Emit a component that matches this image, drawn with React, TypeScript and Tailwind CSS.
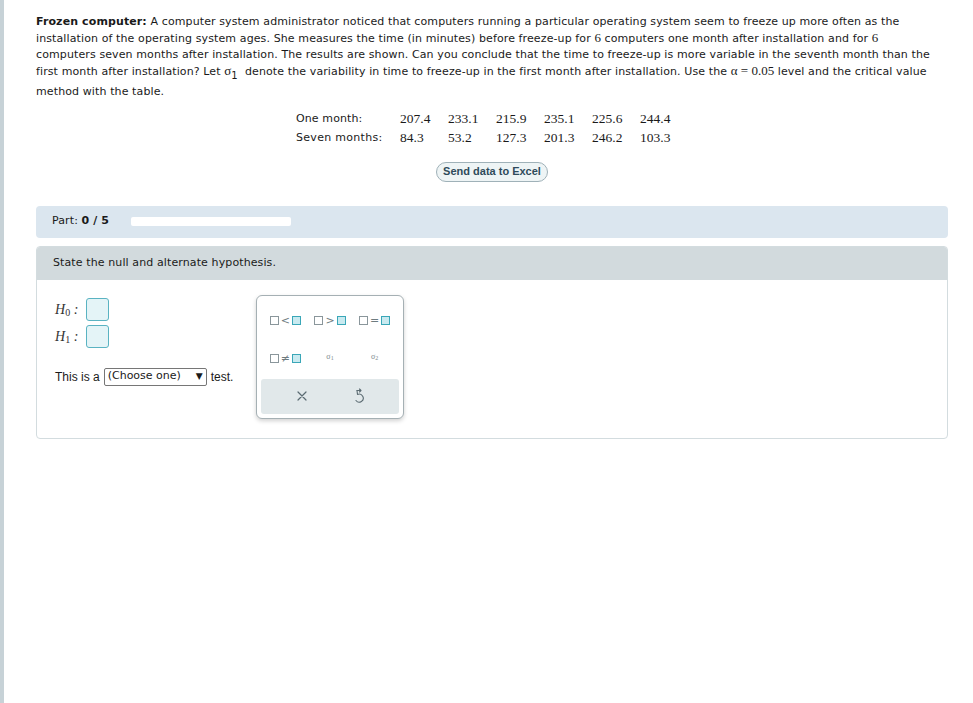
import React from 'react';

const verdana = { fontFamily: '"DejaVu Sans", Verdana, sans-serif' };
const serif = { fontFamily: '"Liberation Serif", "Times New Roman", serif' };
const arial = { fontFamily: '"Liberation Sans", Arial, sans-serif' };

const oneMonth = ['207.4', '233.1', '215.9', '235.1', '225.6', '244.4'];
const sevenMonths = ['84.3', '53.2', '127.3', '201.3', '246.2', '103.3'];

const Box = ({ filled }: { filled?: boolean }) => (
  <span
    className={
      filled
        ? 'inline-block w-[9px] h-[9px] border border-[#3aa7b8] bg-[#c9eaf0]'
        : 'inline-block w-[9px] h-[9px] border border-[#8a969b] bg-white'
    }
  />
);

const Relation = ({ op }: { op: string }) => (
  <span className="flex items-center gap-[1px] text-[11px] leading-none text-[#6e7b80]">
    <Box />
    <span className="px-[1px]">{op}</span>
    <Box filled />
  </span>
);

const Sigma = ({ sub }: { sub: string }) => (
  <span className="text-[8px] text-[#7d898d] leading-none" style={serif}>
    σ<sub className="text-[6px]">{sub}</sub>
  </span>
);

const UndoIcon = () => (
  <svg width="12" height="16" viewBox="0 0 12 16" fill="none" stroke="#5b6b72" strokeWidth="1.1" strokeLinecap="round" strokeLinejoin="round">
    <path d="M4 2.5 L8 2.5 M6.5 1 L8 2.5 L6.5 4" />
    <path d="M4 2.5 L4.5 6.5 A4 4 0 1 1 3 12.5" />
  </svg>
);

const CrossIcon = () => (
  <svg width="12" height="12" viewBox="0 0 12 12" stroke="#5b6b72" strokeWidth="1.2" strokeLinecap="round">
    <path d="M2 2 L10 10 M10 2 L2 10" />
  </svg>
);

const HypoInput = () => (
  <span className="inline-block w-[23px] h-[23px] rounded-[3px] border-[1.5px] border-[#5ab3c2] bg-[#e4f4f7]" />
);

const Palette = () => (
  <div className="w-[148px] -mt-[3px] rounded-[6px] border border-[#a5b0b4] bg-white shadow-[0_2px_4px_rgba(0,0,0,0.18)] px-[4px] pt-[19px] pb-[4px]">
    <div className="grid grid-cols-3 gap-y-[27px] justify-items-center px-[2px]">
      <Relation op="<" />
      <Relation op=">" />
      <Relation op="=" />
      <Relation op="≠" />
      <Sigma sub="1" />
      <Sigma sub="2" />
    </div>
    <div className="mt-[15px] h-[35px] rounded-[3px] bg-[#e1e8ea] flex items-center justify-around px-[12px]">
      <CrossIcon />
      <UndoIcon />
    </div>
  </div>
);

const Num = ({ children }: { children: React.ReactNode }) => (
  <span className="text-[13px] tracking-normal" style={serif}>
    {children}
  </span>
);

export default function App() {
  return (
    <div className="min-h-[703px] bg-white flex" style={verdana}>
      <div className="w-[4px] bg-[#c7d2d7] shrink-0" />
      <div className="flex-1 pl-[32px] pr-[25px] pt-[14px]">
        <div className="text-[11px] leading-[16.4px] text-[#1a1a1a] tracking-[0.11px] whitespace-nowrap">
          <div className="h-[16.4px]">
            <b>Frozen computer:</b> A computer system administrator noticed that computers running a particular
            operating system seem to freeze up more often as the
          </div>
          <div className="h-[16.4px]">
            installation of the operating system ages. She measures the time (in minutes) before freeze-up for{' '}
            <Num>6</Num> computers one month after installation and for <Num>6</Num>
          </div>
          <div className="h-[16.4px]">
            computers seven months after installation. The results are shown. Can you conclude that the time to
            freeze-up is more variable in the seventh month than the
          </div>
          <div className="h-[21px]">
            first month after installation? Let <Num>σ</Num>
            <span className="text-[10px] relative top-[4px]">1</span>&nbsp; denote the variability in time to
            freeze-up in the first month after installation. Use the <Num>α = 0.05</Num> level and the critical
            value
          </div>
          <div className="h-[16.4px]">method with the table.</div>
        </div>

        <div className="mt-[9px] ml-[260px] text-[11px] text-[#1a1a1a] tracking-[0.11px]">
          <div className="flex items-center h-[19px]">
            <span className="w-[104px]">One month:</span>
            {oneMonth.map((v) => (
              <span key={v} className="w-[48px] text-[13.5px] tracking-normal" style={serif}>{v}</span>
            ))}
          </div>
          <div className="flex items-center h-[19px]">
            <span className="w-[104px] tracking-[0.3px]">Seven months:</span>
            {sevenMonths.map((v) => (
              <span key={v} className="w-[48px] text-[13.5px] tracking-normal" style={serif}>{v}</span>
            ))}
          </div>
        </div>

        <div className="mt-[14px] flex justify-center">
          <button
            className="h-[20px] px-[6px] rounded-full border border-[#9fb1b8] bg-[#eef4f5] text-[11px] font-bold text-[#2f4b5b] leading-none"
            style={arial}
          >
            Send data to Excel
          </button>
        </div>

        <div className="mt-[24px] h-[32px] rounded-[4px] bg-[#dbe6ef] flex items-center pl-[16px] text-[11px] text-[#1a1a1a] tracking-[0.11px]">
          <span>
            Part: <b>0 / 5</b>
          </span>
          <span className="ml-[22px] w-[160px] h-[9px] rounded-[2px] bg-white" />
        </div>

        <div className="mt-[8px] rounded-[4px] border border-[#d3dcdf] overflow-hidden">
          <div className="h-[33px] bg-[#d2dadd] flex items-center pl-[16px] text-[11px] text-[#1a1a1a] tracking-[0.11px]">
            State the null and alternate hypothesis.
          </div>
          <div className="h-[158px] flex pt-[18px] pl-[18px]">
            <div className="w-[201px]">
              <div className="flex flex-col gap-[4px]">
                <div className="flex items-center">
                  <span className="w-[31px] text-[14px] italic text-[#333]" style={serif}>
                    H<sub className="text-[10px] not-italic">0</sub> :
                  </span>
                  <HypoInput />
                </div>
                <div className="flex items-center">
                  <span className="w-[31px] text-[14px] italic text-[#333]" style={serif}>
                    H<sub className="text-[10px] not-italic">1</sub> :
                  </span>
                  <HypoInput />
                </div>
              </div>
              <div className="mt-[20px] flex items-center text-[12px] text-[#1a1a1a]" style={arial}>
                <span>This is a</span>
                <span
                  className="ml-[4px] h-[18px] w-[103px] border border-[#767676] rounded-[2px] flex items-center justify-between px-[3px] text-[11px]"
                  style={verdana}
                >
                  <span>(Choose one)</span>
                  <span className="text-[9px]">▼</span>
                </span>
                <span className="ml-[4px]">test.</span>
              </div>
            </div>
            <div>
              <Palette />
            </div>
          </div>
        </div>
      </div>
    </div>
  );
}
